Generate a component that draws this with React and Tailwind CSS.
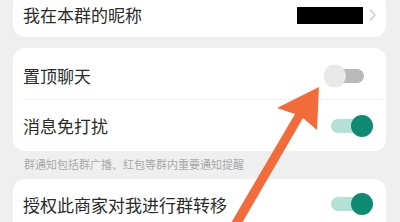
import React from "react";

const font = { fontFamily: '"Noto Sans CJK SC", "Noto Sans", sans-serif' };

function Toggle({ on }) {
  return (
    <div className="relative w-[49px] h-[24px] shrink-0">
      <div
        className={`absolute left-[7px] right-[9px] top-[5px] h-[14px] rounded-full ${
          on ? "bg-[#b5e0d6]" : "bg-[#b9b9b9]"
        }`}
      />
      <div
        className={`absolute top-[1px] w-[22px] h-[22px] rounded-full ${
          on ? "right-0 bg-[#0f8a73]" : "left-0 bg-[#e9e9e9] shadow-[0_0_1px_rgba(0,0,0,0.15)]"
        }`}
      />
    </div>
  );
}

export default function App() {
  return (
    <div className="relative w-[400px] h-[222px] overflow-hidden bg-[#efefef]" style={font}>
      <div className="flex flex-col pl-[13px] pr-[14px]">
        {/* nickname card */}
        <div className="mt-[-7px] h-[44px] bg-white rounded-[12px] flex items-center pl-[10px] pr-[9px]">
          <span className="flex-1 text-[17px] text-[#2b2b2b]">我在本群的昵称</span>
          <div className="w-[66px] h-[17px] bg-black" />
          <svg className="ml-[5px]" width="9" height="14" viewBox="0 0 9 14">
            <path d="M2 1.5 L7 7 L2 12.5" fill="none" stroke="#c9c9c9" strokeWidth="1.3" />
          </svg>
        </div>

        {/* pin / mute card */}
        <div className="mt-[11px] bg-white rounded-[12px] flex flex-col">
          <div className="h-[51px] flex items-center pt-[4px] pl-[10px] pr-[13px]">
            <span className="flex-1 text-[17px] text-[#2b2b2b]">置顶聊天</span>
            <Toggle on={false} />
          </div>
          <div className="ml-[10px] mr-[3px] h-px bg-[#f0f0f0]" />
          <div className="h-[51px] flex items-center pl-[10px] pr-[13px]">
            <span className="flex-1 text-[17px] text-[#2b2b2b]">消息免打扰</span>
            <Toggle on />
          </div>
        </div>

        <div className="h-[28px] pl-[11px] pt-[4px] text-[11px] leading-[18px] text-[#a9a9a9]">
          群通知包括群广播、红包等群内重要通知提醒
        </div>

        {/* transfer card */}
        <div className="bg-white rounded-[12px] h-[60px] flex items-start pt-[13px] pl-[10px] pr-[13px]">
          <span className="flex-1 text-[17px] text-[#2b2b2b]">授权此商家对我进行群转移</span>
          <Toggle on />
        </div>
      </div>

      {/* annotation arrow */}
      <svg className="absolute inset-0" width="400" height="222" viewBox="0 0 400 222">
        <polygon
          points="319,87 277,108 295,114 231,223 242,223 303,118 317,130"
          fill="#f26b3a"
        />
      </svg>
    </div>
  );
}
